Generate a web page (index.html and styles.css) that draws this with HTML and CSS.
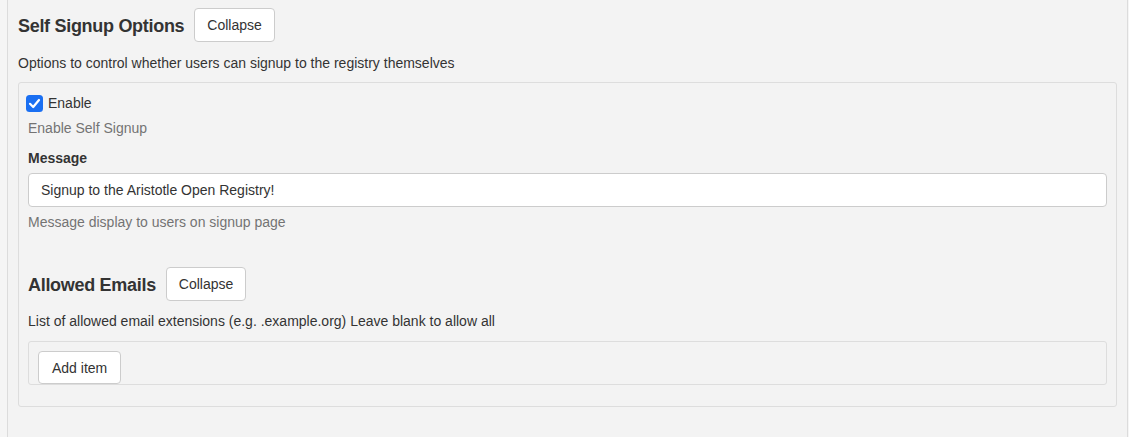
FILE: index.html
```html
<!DOCTYPE html>
<html>
<head>
<meta charset="utf-8">
<link rel="stylesheet" href="styles.css">
</head>
<body>
<div class="page">
  <div class="section-head">
    <h3 class="section-title">Self Signup Options</h3>
    <button class="btn">Collapse</button>
  </div>
  <p class="desc">Options to control whether users can signup to the registry themselves</p>
  <div class="panel">
    <label class="check-row">
      <span class="checkbox"><svg viewBox="0 0 17 17" width="17" height="17"><path d="M4 8.8 L7.2 12 L13 5" fill="none" stroke="#fff" stroke-width="2.2" stroke-linecap="round" stroke-linejoin="round"/></svg></span>
      <span>Enable</span>
    </label>
    <div class="help help-first">Enable Self Signup</div>
    <div class="field-label">Message</div>
    <div class="input">Signup to the Aristotle Open Registry!</div>
    <div class="help">Message display to users on signup page</div>

    <div class="section-head sub-head">
      <h3 class="section-title">Allowed Emails</h3>
      <button class="btn">Collapse</button>
    </div>
    <p class="desc sub-desc">List of allowed email extensions (e.g. .example.org) Leave blank to allow all</p>
    <div class="list-panel">
      <button class="btn btn-add">Add item</button>
    </div>
  </div>
</div>
</body>
</html>
```

FILE: styles.css
```css
html, body {
  margin: 0;
  padding: 0;
}
body {
  background: #f5f5f5;
  font-family: "Liberation Sans", Arial, Helvetica, sans-serif;
  font-size: 14px;
  line-height: 20px;
  color: #333;
  height: 437px;
  overflow: hidden;
}
.page {
  box-sizing: border-box;
  margin-left: 7px;
  width: 1121px;
  min-height: 437px;
  background: #f3f3f3;
  border-left: 1px solid #dcdcdc;
  border-right: 1px solid #dcdcdc;
  padding: 8px 10px 0 10px;
}
.section-head {
  display: flex;
  align-items: center;
  gap: 10px;
  height: 34px;
}
.section-title {
  margin: 0;
  font-size: 18px;
  font-weight: bold;
  line-height: 22px;
  color: #333;
  letter-spacing: -0.3px;
  position: relative;
  top: 1px;
}
.btn {
  box-sizing: border-box;
  height: 34px;
  padding: 6px 12px;
  font-family: inherit;
  font-size: 14px;
  line-height: 20px;
  color: #333;
  background: #fff;
  border: 1px solid #ccc;
  border-radius: 4px;
}
.btn-add {
  height: 33px;
  padding: 6px 13px;
}
.desc {
  margin: 11px 0 9px 0;
}
.panel {
  background: #f3f3f3;
  border: 1px solid #dddddd;
  border-radius: 3px;
  padding: 10px 9px 21px 9px;
}
.check-row {
  display: flex;
  align-items: center;
  gap: 5px;
  height: 20px;
  margin-left: -2px;
}
.checkbox {
  display: block;
  width: 17px;
  height: 17px;
  border-radius: 3.5px;
  background: #1a6ff2;
}
.checkbox svg {
  display: block;
}
.help {
  color: #737373;
  margin-top: 5px;
}
.field-label {
  font-weight: bold;
  margin-top: 10px;
}
.input {
  box-sizing: border-box;
  height: 34px;
  margin-top: 5px;
  padding: 6px 12px;
  background: #fff;
  border: 1px solid #ccc;
  border-radius: 4px;
  color: #333;
}
.sub-head {
  margin-top: 35px;
}
.sub-desc {
  margin: 10px 0 10px 0;
}
.list-panel {
  border: 1px solid #dddddd;
  border-radius: 3px;
  padding: 9px 9px 0 9px;
  display: flex;
}
```
